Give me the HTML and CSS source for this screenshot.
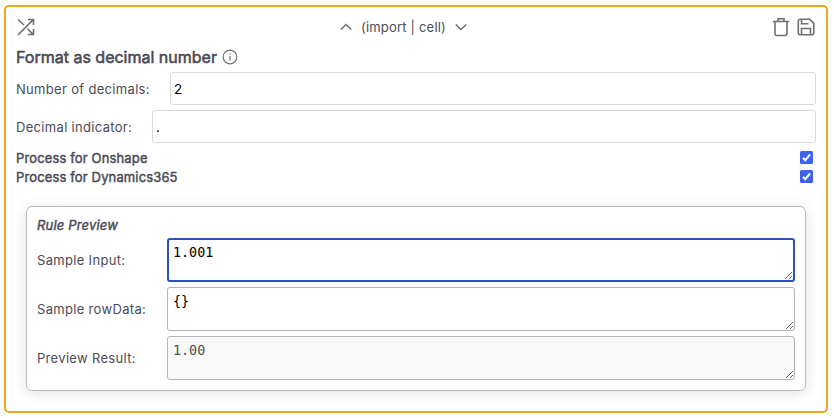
FILE: index.html
```
<!DOCTYPE html>
<html lang="en">
<head>
<meta charset="utf-8">
<title>Format as decimal number</title>
<link rel="stylesheet" href="styles.css">
</head>
<body>
<main class="card">
  <header class="toolbar">
    <svg class="icon shuffle" viewBox="0 0 18 18"><path d="M1 1.5l6 5.5M1 17L16.2 1.6M11 1.5h5.5V7M10.5 10.8l5.7 5.5M11 16.5h5.5V11"/></svg>
    <div class="step">
      <svg class="icon chevron" viewBox="0 0 12 8"><path d="M.8 6.5l5.2-5 5.2 5"/></svg>
      <span class="scope">(import | cell)</span>
      <svg class="icon chevron" viewBox="0 0 12 8"><path d="M.8 1.5l5.2 5 5.2-5"/></svg>
    </div>
    <div class="actions">
      <svg class="icon trash" viewBox="0 0 18 20"><path d="M.8 4.5h16.4M6 4V1.8h6V4M3 4.5v12q0 2 2 2h8q2 0 2-2v-12"/></svg>
      <svg class="icon save" viewBox="0 0 18 18"><path d="M1.3 3.2Q1.3 1.2 3.3 1.2h9.5l4 4.2v9.4q0 2-2 2H3.3q-2 0-2-2zM4.5 1.5v4.2h7M4.5 16.5v-6h9v6"/></svg>
    </div>
  </header>
  <h1 class="title">Format as decimal number
    <svg class="icon info" viewBox="0 0 16 16"><circle cx="8" cy="8" r="6.8"/><path d="M8 7v4.4M8 4.4v1.3"/></svg>
  </h1>
  <label class="field field-decimals"><span>Number of decimals:</span><input type="text" value="2"></label>
  <label class="field field-indicator"><span>Decimal indicator:</span><input type="text" value="."></label>
  <div class="options">
    <label class="option"><span>Process for Onshape</span><svg class="check" viewBox="0 0 13 13"><rect width="13" height="13" rx="1.5"/><path d="M3 6.8l2.3 2.4L10 3.5"/></svg></label>
    <label class="option"><span>Process for Dynamics365</span><svg class="check" viewBox="0 0 13 13"><rect width="13" height="13" rx="1.5"/><path d="M3 6.8l2.3 2.4L10 3.5"/></svg></label>
  </div>
  <section class="preview">
    <h2 class="preview-title">Rule Preview</h2>
    <label class="sample"><span>Sample Input:</span><textarea class="focused">1.001</textarea></label>
    <label class="sample"><span>Sample rowData:</span><textarea>{}</textarea></label>
    <label class="sample"><span>Preview Result:</span><textarea class="result" readonly>1.00</textarea></label>
  </section>
</main>
</body>
</html>
```
FILE: styles.css
```
* { box-sizing: border-box; }
body {
  margin: 0;
  padding: 5px 6px 5px 4px;
  background: #fff;
  color: #4b4b55;
  font: 13px/19px Inter, sans-serif;
  letter-spacing: 0.32px;
}
.card {
  height: 408px;
  padding: 10px;
  border: 2px solid #eaa61c;
  border-radius: 5px;
}
.icon { display: block; fill: none; stroke: #707070; stroke-width: 1.6; }
.toolbar {
  display: grid;
  grid-template-columns: 1fr auto 1fr;
  align-items: center;
  height: 20px;
}
.shuffle { width: 18px; height: 18px; margin-left: 1px; }
.step { display: flex; align-items: center; gap: 9px; margin-right: 25px; }
.scope { letter-spacing: 0.2px; }
.chevron { width: 12px; height: 8px; }
.actions { display: flex; justify-content: flex-end; align-items: center; gap: 7px; padding-right: 1px; }
.trash { width: 18px; height: 20px; }
.save { width: 18px; height: 18px; }
.title {
  display: flex;
  align-items: center;
  gap: 5px;
  height: 20px;
  margin: 10px 0 5px;
  font-size: 16px;
  font-weight: 400;
  letter-spacing: 0;
  -webkit-text-stroke: 0.6px;
}
.info { width: 16px; height: 16px; stroke-width: 1.2; }
.field {
  display: grid;
  align-items: center;
  height: 33px;
  margin-bottom: 5px;
}
.field span { padding-top: 2px; }
.field-decimals { grid-template-columns: 154px 1fr; }
.field-indicator { grid-template-columns: 136px 1fr; }
input {
  width: 100%;
  height: 33px;
  padding: 1px 3px;
  border: 1px solid #d9d9dc;
  border-radius: 3px;
  color: #000;
  font: 13.33px Inter, sans-serif;
  outline: none;
}
.options { margin-top: 6px; }
.option {
  display: flex;
  justify-content: space-between;
  height: 19px;
  padding-right: 3px;
  letter-spacing: 0.14px;
  -webkit-text-stroke: 0.45px;
}
.check { width: 13px; height: 13px; margin-top: 2px; fill: #3c62f2; stroke: none; }
.check path { fill: none; stroke: #fff; stroke-width: 2; }
.preview {
  height: 185px;
  margin: 19px 10px 0;
  padding: 10px;
  border: 1px solid #b9b9bd;
  border-radius: 6px;
  box-shadow: 0 2px 14px rgba(0, 0, 0, 0.12);
}
.preview-title {
  height: 16px;
  margin: 0 0 5px;
  font-size: 13px;
  line-height: 17px;
  font-weight: 400;
  font-style: italic;
  letter-spacing: 0.18px;
  -webkit-text-stroke: 0.45px;
}
.sample {
  display: grid;
  grid-template-columns: 130px 1fr;
  align-items: center;
  height: 44px;
  margin-bottom: 5px;
}
textarea {
  display: block;
  width: 100%;
  height: 44px;
  padding: 5px;
  border: 1px solid #b5b5b8;
  border-radius: 3px;
  color: #000;
  background: #fff;
  font: 13.4px/17px "DejaVu Sans Mono", monospace;
  outline: none;
  overflow: hidden;
}
.focused { padding: 4px; border: 2px solid #2d4fc4; }
.result { color: #505055; background: #f8f8f8; }
```
